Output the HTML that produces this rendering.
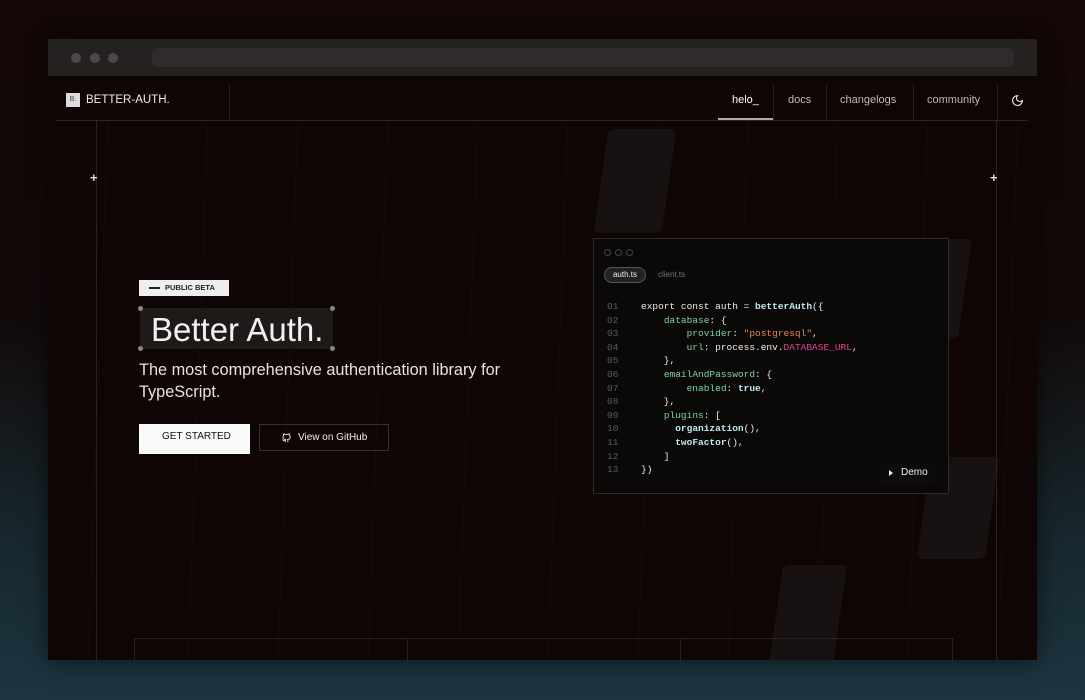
<!DOCTYPE html><html><head><style>
*{margin:0;padding:0;box-sizing:border-box}
body{width:1085px;height:700px;overflow:hidden;position:relative;font-family:"Liberation Sans",sans-serif;
background:linear-gradient(180deg,#140707 0%,#120909 45%,#17262c 75%,#1d3540 100%);}
.abs{position:absolute}
.frame{left:48px;top:39px;width:989px;height:621px;background:#0f0505;overflow:hidden;box-shadow:0 0 20px rgba(0,0,0,.6)}
.bar{left:0;top:0;width:989px;height:37px;background:#252121}
.dot{width:10px;height:10px;border-radius:50%;background:#4d4848;top:14px}
.addr{left:104px;top:9px;width:862px;height:19px;border-radius:6px;background:#2f2b2b}
.mono{font-family:"Liberation Mono",monospace}
.vl{width:1px;background:#2a2222}
.hl{height:1px;background:#2a2222}
.code div{height:13.6px;white-space:pre}
.n{color:#5d5a5a}
.w{color:#f1ecec}.g{color:#7fd4a8}.o{color:#e8865a}.p{color:#e0449a}.c{color:#bfe9f4;font-weight:bold}
.slab{background:#181111;border-radius:6px;transform:skewX(-8deg)}
</style></head><body>
<div class="abs frame">
 <svg class="abs" style="left:0;top:81px" width="989" height="540">
  <g stroke="#160c0c" stroke-width="1" fill="none">
   <path d="M60 0 L40 540 M160 0 L140 540 M250 0 L230 540 M340 0 L320 540 M430 0 L410 540 M520 0 L500 540 M610 0 L590 540 M700 0 L680 540 M790 0 L770 540 M880 0 L860 540 M970 0 L950 540"/>
   <path d="M0 110 H989 M0 250 H989 M0 370 H989"/>
  </g>
 </svg>
 <div class="abs slab" style="left:553px;top:90px;width:68px;height:104px"></div>
 <div class="abs slab" style="left:877px;top:200px;width:40px;height:100px"></div>
 <div class="abs slab" style="left:876px;top:418px;width:68px;height:102px"></div>
 <div class="abs slab" style="left:728px;top:526px;width:64px;height:100px"></div>
 <div class="abs bar"></div>
 <div class="abs dot" style="left:23px"></div><div class="abs dot" style="left:42px"></div><div class="abs dot" style="left:60px"></div>
 <div class="abs addr"></div>
 <div class="abs hl" style="left:8px;top:81px;width:972px;background:#2e2626"></div>
 <div class="abs" style="left:18px;top:54px;width:14px;height:14px;background:#ddd;color:#444;font-size:7px;line-height:14px;text-align:center">B.</div>
 <div class="abs" style="left:38px;top:54px;color:#eee;font-size:11.5px;line-height:14px">BETTER-AUTH.</div>
 <div class="abs vl" style="left:181px;top:46px;height:35px"></div>
 <div class="abs vl" style="left:725px;top:46px;height:35px"></div>
 <div class="abs vl" style="left:778px;top:46px;height:35px"></div>
 <div class="abs vl" style="left:865px;top:46px;height:35px"></div>
 <div class="abs vl" style="left:949px;top:46px;height:35px"></div>
 <div class="abs" style="left:684px;top:55px;color:#fff;font-size:11px">helo_</div>
 <div class="abs" style="left:670px;top:79px;width:55px;height:2px;background:#aaa"></div>
 <div class="abs" style="left:740px;top:55px;color:#bbb;font-size:11px">docs</div>
 <div class="abs" style="left:792px;top:55px;color:#bbb;font-size:11px">changelogs</div>
 <div class="abs" style="left:879px;top:55px;color:#bbb;font-size:11px">community</div>
 <svg class="abs" style="left:963px;top:55px" width="13" height="13" viewBox="0 0 24 24"><path d="M12 3a6 6 0 0 0 9 9 9 9 0 1 1-9-9z" fill="none" stroke="#eee" stroke-width="2"/></svg>
 <div class="abs vl" style="left:48px;top:81px;height:540px"></div>
 <div class="abs vl" style="left:948px;top:81px;height:540px"></div>
 <div class="abs" style="left:42px;top:132px;color:#ddd;font-size:13px;line-height:13px;font-weight:bold">+</div>
 <div class="abs" style="left:942px;top:132px;color:#ddd;font-size:13px;line-height:13px;font-weight:bold">+</div>
 <div class="abs" style="left:86px;top:599px;width:819px;height:30px;border:1px solid #2a2222"></div>
 <div class="abs vl" style="left:359px;top:599px;height:22px"></div>
 <div class="abs vl" style="left:632px;top:599px;height:22px"></div>
 <div class="abs" style="left:91px;top:241px;width:90px;height:16px;background:#eee;font-size:7.5px;color:#222;line-height:16px;padding-left:26px;font-weight:bold">PUBLIC BETA</div>
 <div class="abs" style="left:101px;top:248px;width:11px;height:2px;background:#222"></div>
 <div class="abs" style="left:92px;top:269px;width:193px;height:41px;background:#1e1a1a"></div>
 <div class="abs" style="left:103px;top:270px;color:#f4f0f0;font-size:33px;line-height:41px">Better Auth.</div>
 <div class="abs" style="left:90px;top:267px;width:5px;height:5px;border-radius:50%;background:#888"></div>
 <div class="abs" style="left:282px;top:267px;width:5px;height:5px;border-radius:50%;background:#888"></div>
 <div class="abs" style="left:90px;top:307px;width:5px;height:5px;border-radius:50%;background:#888"></div>
 <div class="abs" style="left:282px;top:307px;width:5px;height:5px;border-radius:50%;background:#888"></div>
 <div class="abs" style="left:91px;top:320px;color:#e8e3e3;font-size:16.3px;line-height:22px;width:380px">The most comprehensive authentication library for TypeScript.</div>
 <div class="abs" style="left:91px;top:385px;width:111px;height:30px;background:#fafafa;color:#111;font-size:10px;line-height:26px;padding-left:23px">GET STARTED</div>
 <div class="abs" style="left:211px;top:385px;width:130px;height:27px;border:1px solid #333;color:#eee;font-size:10px;line-height:25px;padding-left:38px">View on GitHub</div>
 <svg class="abs" style="left:233px;top:393px" width="11" height="11" viewBox="0 0 24 24"><path d="M9 19c-4 1.5-4-2-6-2.5M15 22v-3.5c0-1 .1-1.4-.5-2 2.8-.3 5.5-1.4 5.5-6a4.6 4.6 0 0 0-1.3-3.2 4.2 4.2 0 0 0-.1-3.2s-1-.3-3.4 1.3a11.6 11.6 0 0 0-6 0C6.8 3.8 5.8 4.1 5.8 4.1a4.2 4.2 0 0 0-.1 3.2A4.6 4.6 0 0 0 4.4 10.5c0 4.6 2.7 5.7 5.500 6-.6.6-.6 1.2-.5 2V22" fill="none" stroke="#eee" stroke-width="2"/></svg>
 <div class="abs" style="left:545px;top:199px;width:356px;height:256px;background:#0b0808;border:1px solid #2e2a2a">
  <div class="abs" style="left:10px;top:10px;width:7px;height:7px;border:1px solid #444;border-radius:50%"></div>
  <div class="abs" style="left:21px;top:10px;width:7px;height:7px;border:1px solid #444;border-radius:50%"></div>
  <div class="abs" style="left:32px;top:10px;width:7px;height:7px;border:1px solid #444;border-radius:50%"></div>
  <div class="abs" style="left:10px;top:28px;width:42px;height:16px;border:1px solid #555;border-radius:8px;background:#222;color:#eee;font-size:8px;line-height:14px;text-align:center">auth.ts</div>
  <div class="abs" style="left:64px;top:28px;color:#777;font-size:8px;line-height:16px">client.ts</div>
  <div class="abs mono code n" style="left:13px;top:62px;font-size:9.5px">
   <div>01</div><div>02</div><div>03</div><div>04</div><div>05</div><div>06</div><div>07</div><div>08</div><div>09</div><div>10</div><div>11</div><div>12</div><div>13</div>
  </div>
  <div class="abs mono code w" style="left:47px;top:62px;font-size:9.5px">
<div>export const auth = <span class="c">betterAuth</span>({</div>
<div>    <span class="g">database</span>: {</div>
<div>        <span class="g">provider</span>: <span class="o">"postgresql"</span>,</div>
<div>        <span class="g">url</span>: process.env.<span class="p">DATABASE_URL</span>,</div>
<div>    },</div>
<div>    <span class="g">emailAndPassword</span>: {</div>
<div>        <span class="g">enabled</span>: <span class="c">true</span>,</div>
<div>    },</div>
<div>    <span class="g">plugins</span>: [</div>
<div>      <span class="c">organization</span>(),</div>
<div>      <span class="c">twoFactor</span>(),</div>
<div>    ]</div>
<div>})</div>
  </div>
  <div class="abs" style="left:285px;top:224px;width:56px;height:20px;background:#0e0b0b;color:#eee;font-size:10px;line-height:20px;padding-left:22px">Demo</div>
  <div class="abs" style="left:295px;top:231px;width:0;height:0;border-left:4px solid #eee;border-top:3px solid transparent;border-bottom:3px solid transparent"></div>
 </div>
</div>
</body></html>
